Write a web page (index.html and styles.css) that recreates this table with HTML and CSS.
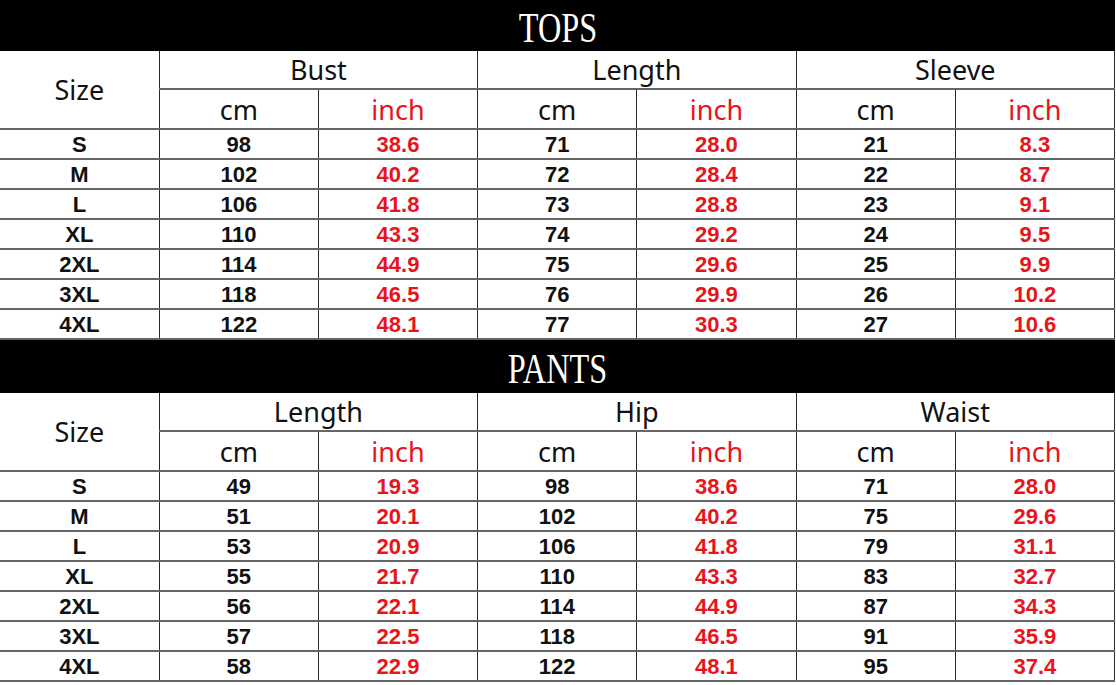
FILE: index.html
```html
<!DOCTYPE html>
<html lang="en">
<head>
<meta charset="utf-8">
<title>Size Chart</title>
<link rel="stylesheet" href="styles.css">
</head>
<body>
<div class="chart">
  <div class="title title-tops"><span class="title-text">TOPS</span></div>
  <table class="sizes">
    <colgroup><col><col><col><col><col><col><col></colgroup>
    <tr class="head1">
      <td class="hd" rowspan="2">Size</td>
      <td class="hd" colspan="2">Bust</td>
      <td class="hd" colspan="2">Length</td>
      <td class="hd" colspan="2">Sleeve</td>
    </tr>
    <tr class="head2">
      <td class="hd">cm</td><td class="hd red">inch</td>
      <td class="hd">cm</td><td class="hd red">inch</td>
      <td class="hd">cm</td><td class="hd red">inch</td>
    </tr>
    <tr><td>S</td><td>98</td><td class="red">38.6</td><td>71</td><td class="red">28.0</td><td>21</td><td class="red">8.3</td></tr>
    <tr><td>M</td><td>102</td><td class="red">40.2</td><td>72</td><td class="red">28.4</td><td>22</td><td class="red">8.7</td></tr>
    <tr><td>L</td><td>106</td><td class="red">41.8</td><td>73</td><td class="red">28.8</td><td>23</td><td class="red">9.1</td></tr>
    <tr><td>XL</td><td>110</td><td class="red">43.3</td><td>74</td><td class="red">29.2</td><td>24</td><td class="red">9.5</td></tr>
    <tr><td>2XL</td><td>114</td><td class="red">44.9</td><td>75</td><td class="red">29.6</td><td>25</td><td class="red">9.9</td></tr>
    <tr><td>3XL</td><td>118</td><td class="red">46.5</td><td>76</td><td class="red">29.9</td><td>26</td><td class="red">10.2</td></tr>
    <tr><td>4XL</td><td>122</td><td class="red">48.1</td><td>77</td><td class="red">30.3</td><td>27</td><td class="red">10.6</td></tr>
  </table>
  <div class="title title-pants"><span class="title-text">PANTS</span></div>
  <table class="sizes">
    <colgroup><col><col><col><col><col><col><col></colgroup>
    <tr class="head1">
      <td class="hd" rowspan="2">Size</td>
      <td class="hd" colspan="2">Length</td>
      <td class="hd" colspan="2">Hip</td>
      <td class="hd" colspan="2">Waist</td>
    </tr>
    <tr class="head2">
      <td class="hd">cm</td><td class="hd red">inch</td>
      <td class="hd">cm</td><td class="hd red">inch</td>
      <td class="hd">cm</td><td class="hd red">inch</td>
    </tr>
    <tr><td>S</td><td>49</td><td class="red">19.3</td><td>98</td><td class="red">38.6</td><td>71</td><td class="red">28.0</td></tr>
    <tr><td>M</td><td>51</td><td class="red">20.1</td><td>102</td><td class="red">40.2</td><td>75</td><td class="red">29.6</td></tr>
    <tr><td>L</td><td>53</td><td class="red">20.9</td><td>106</td><td class="red">41.8</td><td>79</td><td class="red">31.1</td></tr>
    <tr><td>XL</td><td>55</td><td class="red">21.7</td><td>110</td><td class="red">43.3</td><td>83</td><td class="red">32.7</td></tr>
    <tr><td>2XL</td><td>56</td><td class="red">22.1</td><td>114</td><td class="red">44.9</td><td>87</td><td class="red">34.3</td></tr>
    <tr><td>3XL</td><td>57</td><td class="red">22.5</td><td>118</td><td class="red">46.5</td><td>91</td><td class="red">35.9</td></tr>
    <tr><td>4XL</td><td>58</td><td class="red">22.9</td><td>122</td><td class="red">48.1</td><td>95</td><td class="red">37.4</td></tr>
  </table>
</div>
</body>
</html>
```
FILE: styles.css
```css
html, body {
  margin: 0;
  padding: 0;
  background: #ffffff;
}

.chart {
  width: 1115px;
}

.title {
  background: #000000;
  color: #ffffff;
  display: flex;
  align-items: center;
  justify-content: center;
  font-family: "Liberation Serif", "Times New Roman", serif;
  font-size: 42px;
  line-height: 1;
}

.title-tops {
  height: 51px;
}

.title-pants {
  height: 53px;
}

.title-text {
  display: inline-block;
  transform: scaleX(0.77);
  margin-top: 4px;
}

.sizes {
  width: 1115px;
  border-collapse: collapse;
  table-layout: fixed;
}

.sizes col {
  width: 159px;
}

.sizes td {
  padding: 2px 0 0 0;
  text-align: center;
  vertical-align: middle;
  border-right: 1px solid #2a2a2a;
  border-bottom: 2px solid #666666;
  font-family: "Liberation Sans", Arial, sans-serif;
  font-weight: bold;
  font-size: 22px;
  color: #111111;
  height: 26px;
  line-height: 26px;
}

.sizes tr.head1 td {
  padding-top: 1px;
  height: 36px;
  line-height: 36px;
}

.sizes tr.head2 td {
  padding-top: 1px;
  height: 37px;
  line-height: 37px;
}

.sizes td.hd {
  font-family: "Noto Sans", "Open Sans", sans-serif;
  font-weight: normal;
  font-size: 27px;
}

.sizes td.red {
  color: #e8141b;
}
```
